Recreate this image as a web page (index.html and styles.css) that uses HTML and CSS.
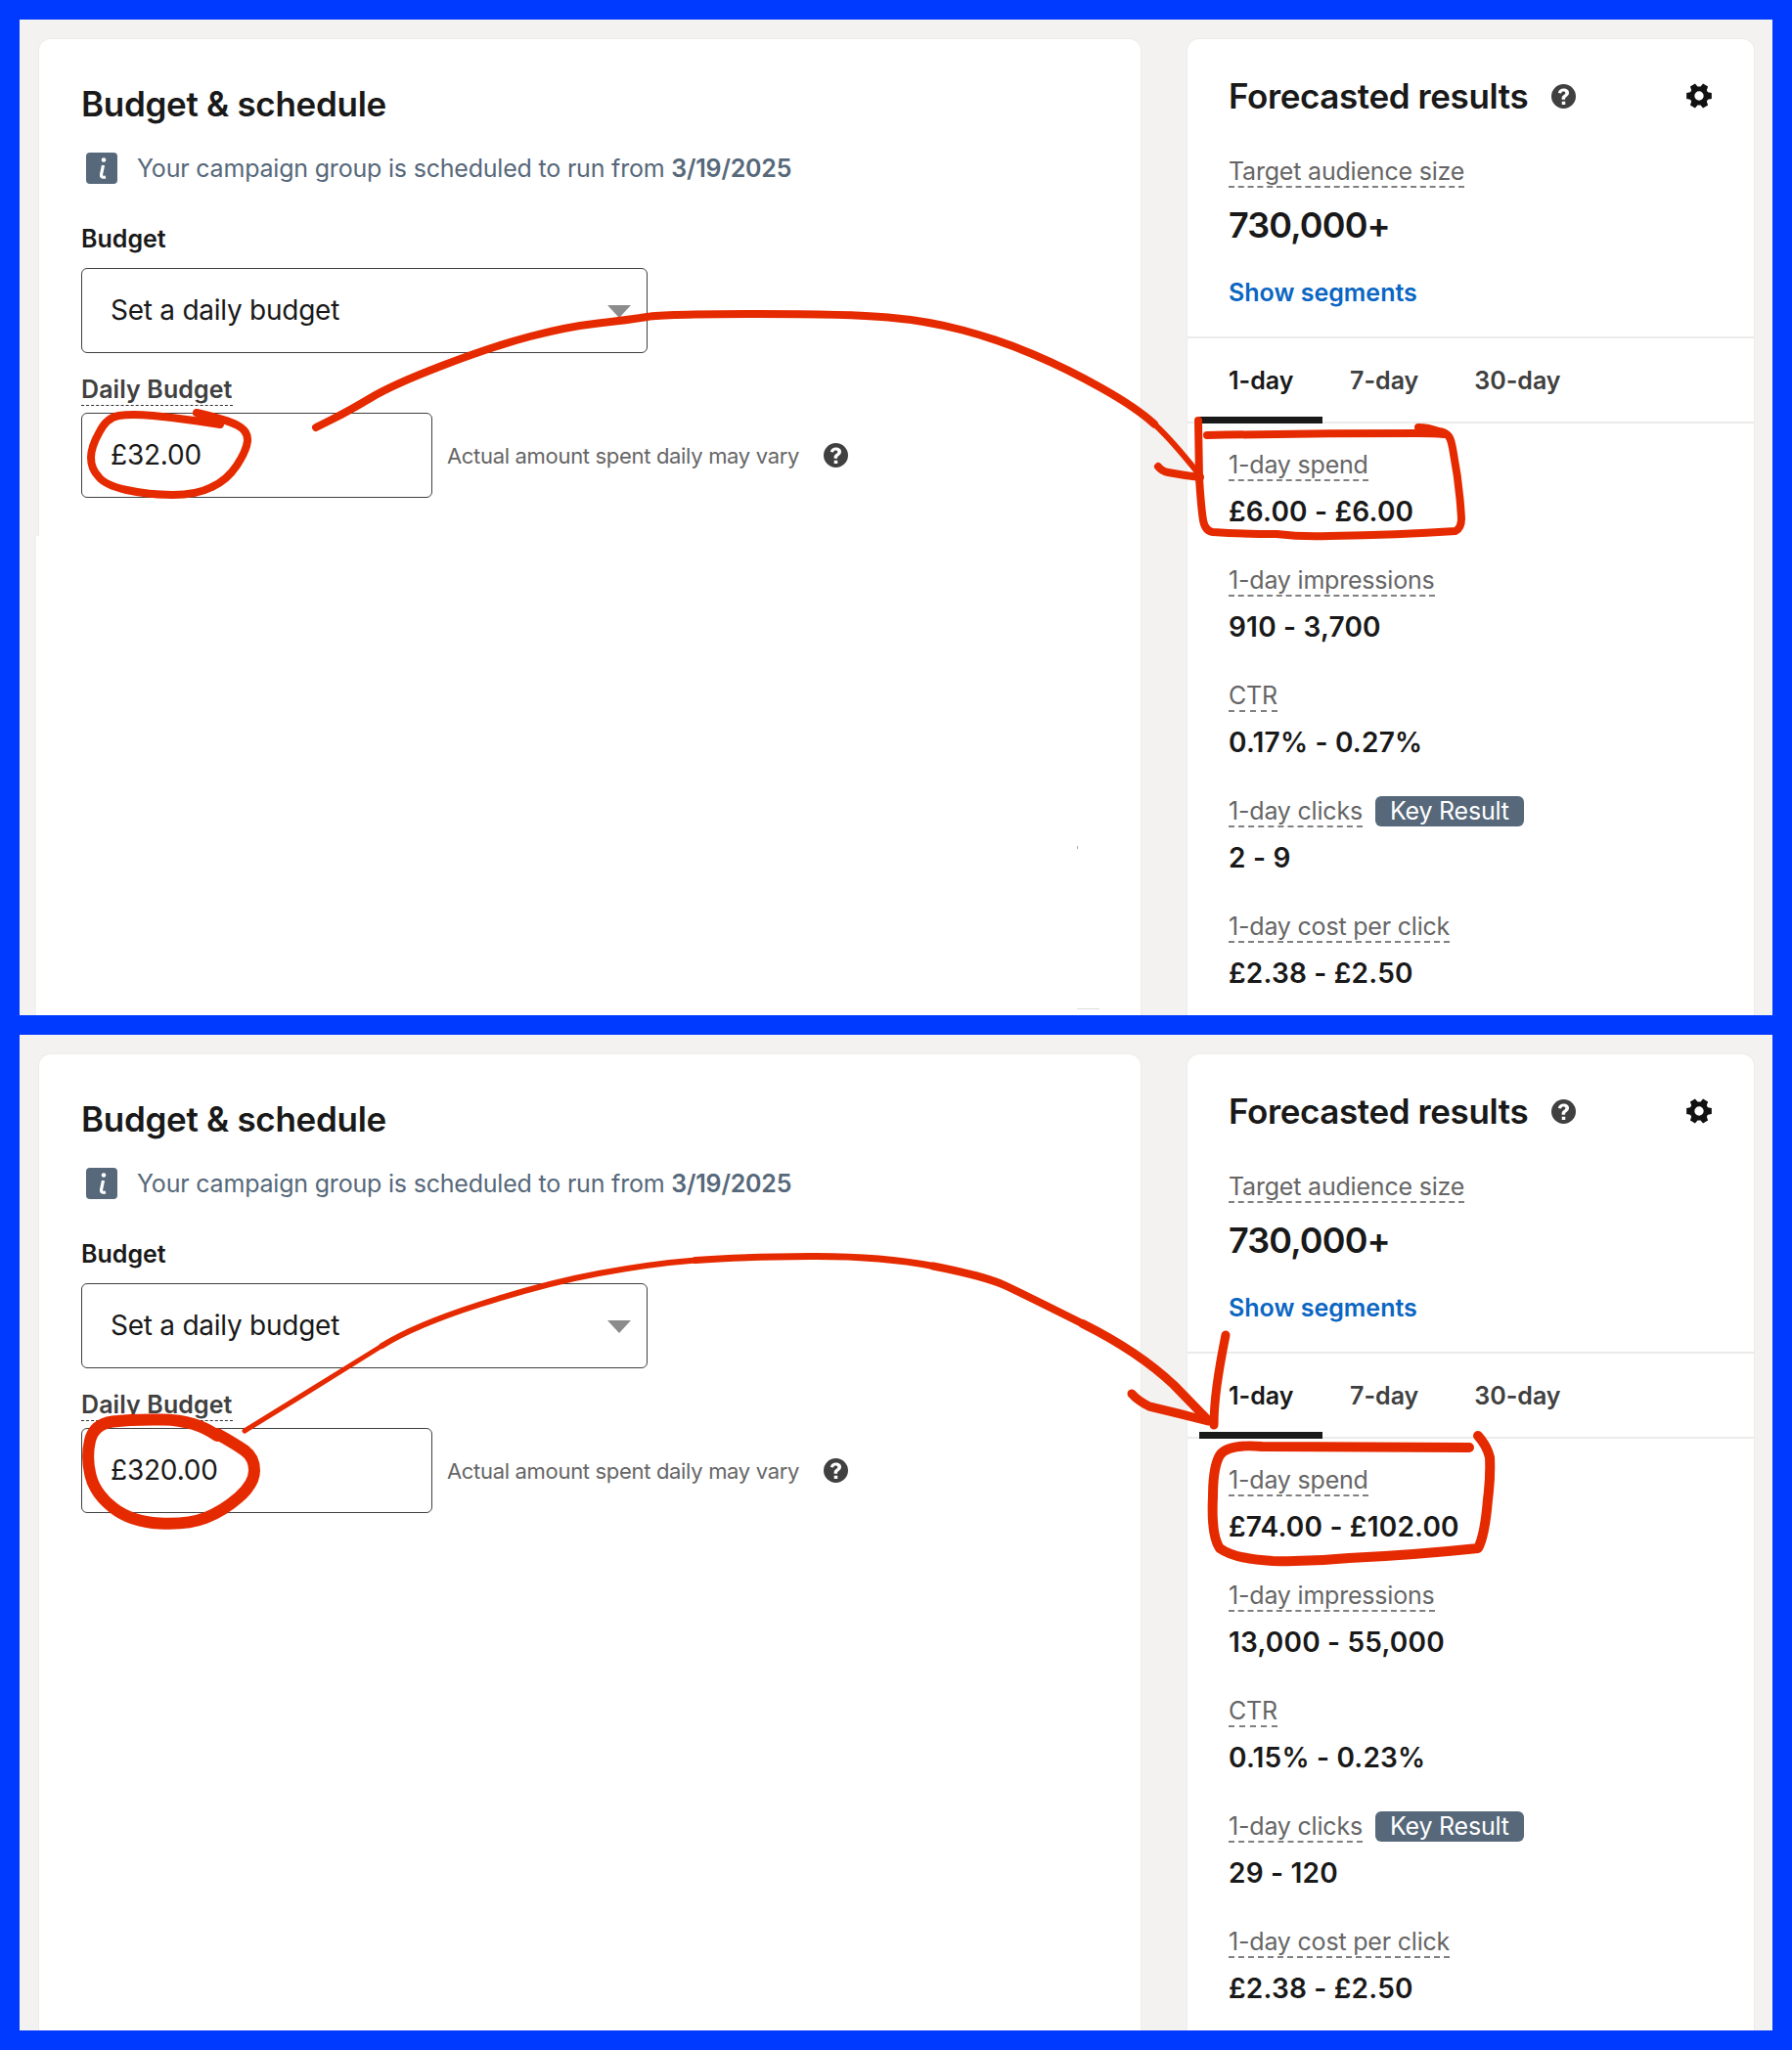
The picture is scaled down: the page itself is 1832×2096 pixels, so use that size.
FILE: index.html
```html
<!DOCTYPE html>
<html lang="en">
<head>
  <meta charset="UTF-8" />
  <title>Budget forecast comparison</title>
  <link rel="stylesheet" href="styles.css">
</head>
<body>
  <div class="page">

    <section class="shot">
      <div class="card budget first">
        <h2>Budget &amp; schedule</h2>
        <div class="notice">
          <svg class="info" viewBox="0 0 32 32"><use href="#info-icon"/></svg>
          <span>Your campaign group is scheduled to run from <b>3/19/2025</b></span>
        </div>
        <label class="field-label">Budget</label>
        <div class="select">Set a daily budget<i class="caret"></i></div>
        <label class="field-label dotted"><span>Daily Budget</span></label>
        <div class="amount-row">
          <div class="amount">£32.00</div>
          <span class="hint">Actual amount spent daily may vary</span>
          <svg class="help" viewBox="0 0 24 24"><use href="#help-icon"/></svg>
        </div>
        <i class="stray-dot"></i>
        <i class="stray-line"></i>
      </div>

      <div class="card forecast">
        <div class="forecast-top">
          <div class="forecast-head">
            <h3>Forecasted results</h3>
            <svg class="help" viewBox="0 0 24 24"><use href="#help-icon"/></svg>
            <svg class="gear" viewBox="0 0 24 24"><use href="#gear-icon"/></svg>
          </div>
          <div class="metric-label">Target audience size</div>
          <div class="audience">730,000+</div>
          <a class="segments">Show segments</a>
        </div>
        <div class="tabs">
          <div class="tab active">1-day</div>
          <div class="tab">7-day</div>
          <div class="tab">30-day</div>
        </div>
        <div class="metrics">
          <div class="metric"><div class="metric-label">1-day spend</div><div class="metric-value">£6.00 - £6.00</div></div>
          <div class="metric"><div class="metric-label">1-day impressions</div><div class="metric-value">910 - 3,700</div></div>
          <div class="metric"><div class="metric-label">CTR</div><div class="metric-value">0.17% - 0.27%</div></div>
          <div class="metric"><div class="metric-label">1-day clicks</div><span class="key">Key Result</span><div class="metric-value">2 - 9</div></div>
          <div class="metric"><div class="metric-label">1-day cost per click</div><div class="metric-value">£2.38 - £2.50</div></div>
        </div>
      </div>
    </section>

    <section class="shot">
      <div class="card budget">
        <h2>Budget &amp; schedule</h2>
        <div class="notice">
          <svg class="info" viewBox="0 0 32 32"><use href="#info-icon"/></svg>
          <span>Your campaign group is scheduled to run from <b>3/19/2025</b></span>
        </div>
        <label class="field-label">Budget</label>
        <div class="select">Set a daily budget<i class="caret"></i></div>
        <label class="field-label dotted"><span>Daily Budget</span></label>
        <div class="amount-row">
          <div class="amount">£320.00</div>
          <span class="hint">Actual amount spent daily may vary</span>
          <svg class="help" viewBox="0 0 24 24"><use href="#help-icon"/></svg>
        </div>
      </div>

      <div class="card forecast">
        <div class="forecast-top">
          <div class="forecast-head">
            <h3>Forecasted results</h3>
            <svg class="help" viewBox="0 0 24 24"><use href="#help-icon"/></svg>
            <svg class="gear" viewBox="0 0 24 24"><use href="#gear-icon"/></svg>
          </div>
          <div class="metric-label">Target audience size</div>
          <div class="audience">730,000+</div>
          <a class="segments">Show segments</a>
        </div>
        <div class="tabs">
          <div class="tab active">1-day</div>
          <div class="tab">7-day</div>
          <div class="tab">30-day</div>
        </div>
        <div class="metrics">
          <div class="metric"><div class="metric-label">1-day spend</div><div class="metric-value">£74.00 - £102.00</div></div>
          <div class="metric"><div class="metric-label">1-day impressions</div><div class="metric-value">13,000 - 55,000</div></div>
          <div class="metric"><div class="metric-label">CTR</div><div class="metric-value">0.15% - 0.23%</div></div>
          <div class="metric"><div class="metric-label">1-day clicks</div><span class="key">Key Result</span><div class="metric-value">29 - 120</div></div>
          <div class="metric"><div class="metric-label">1-day cost per click</div><div class="metric-value">£2.38 - £2.50</div></div>
        </div>
      </div>
    </section>

    <!-- hand drawn red marks on top of the screenshots -->
    <svg class="marks" viewBox="0 0 1832 2096" fill="none" stroke="#e62a00" stroke-linecap="round" stroke-linejoin="round">
      <g stroke-width="8">
        <path d="M225 434L202 430.500Q179 427 156.500 425Q134 423 121.500 425Q109 427 101.500 442Q93 457 93 468Q93 479 100.500 487Q107 496 129.500 501Q152 506 176.500 506Q201 506 216.500 498Q232 491 242 476Q252 461 253 451Q254 441 243 435Q232 429 201 422"/>
        <path d="M323 437L339 429Q357 420 379.500 406.500Q402 393 453 373.500Q504 354 542 344Q580 334 611.500 330.500Q643 327 661.500 324Q680 321 774 321Q868 321 908 324.500Q948 328 984 337.500Q1020 347 1055.500 362Q1091 377 1126.500 397Q1162 417 1180 433.500" />
        <path stroke-width="6" d="M1180 433.500Q1198 450 1225 484"/>
        <path d="M1184 477Q1188 482 1194 483Q1210 486 1227 488"/>
        <path d="M1225 430L1226 489Q1228 520 1230 532Q1232 543 1240 544Q1270 546 1305 546Q1330 549 1359 548Q1430 547 1488 543Q1494 540 1494 530Q1492 495 1486 464Q1484 450 1481 446Q1478 442 1471 441Q1460 437 1450 437"/>
        <path d="M1234 445Q1340 443 1450 443Q1465 443 1476 444"/>
      </g>
      <path stroke-width="12" d="M222 1468Q200 1452 167 1451.500Q134 1451 115 1453.500Q96 1456 92 1473Q88 1490 92.500 1508.500Q97 1527 115.500 1541.500Q134 1556 163 1557.500Q192 1559 210 1552Q228 1545 244 1531Q260 1517 260 1503.500Q260 1490 250 1483Q240 1476 222 1466"/>
      <path stroke-width="5" d="M250 1463L303.500 1430Q357 1397 390.500 1376"/>
      <path stroke-width="6" d="M390.500 1376Q424 1355 491 1333.500Q558 1312 612 1302Q666 1292 711 1288.500"/>
      <path stroke-width="7" d="M711 1288.500Q756 1285 828 1284.500Q900 1284 954 1294.500"/>
      <path stroke-width="8" d="M954 1294.500Q1008 1305 1029 1315Q1050 1325 1107 1353.500"/>
      <path stroke-width="9" d="M1107 1353.500Q1164 1382 1200 1416L1235 1452"/>
      <path stroke-width="9" d="M1157 1425Q1163 1432 1175 1438Q1205 1445 1235 1453"/>
      <path stroke-width="9" d="M1253 1365Q1247 1395 1244 1417Q1241 1440 1241 1457"/>
      <path stroke-width="10" d="M1502 1480L1290 1479Q1255 1476 1247 1488Q1240 1500 1240 1530Q1238 1570 1247 1583Q1262 1594 1301 1596Q1340 1597 1379 1593Q1445 1590 1511 1583Q1518 1570 1521 1533Q1524 1510 1523 1490Q1520 1478 1511 1468"/>
    </svg>

  </div>

  <svg class="defs" aria-hidden="true">
    <symbol id="info-icon" viewBox="0 0 32 32">
      <rect width="32" height="32" rx="4" fill="#56687a"/>
      <circle cx="18" cy="7.500" r="2.300" fill="#fff"/>
      <path d="M17.500 13L15.500 22.500Q15 26 20 25" fill="none" stroke="#fff" stroke-width="3.200"/>
    </symbol>
    <symbol id="help-icon" viewBox="0 0 24 24">
      <path fill-rule="evenodd" d="M12 0a12 12 0 1 1 0 24 12 12 0 0 1 0-24zm-1.700 17.100v3h3.400v-3zM12 4.300c-2.900 0-5 1.500-5.400 4.300l3 .5c.3-1.400 1.100-2 2.300-2 1.100 0 1.900.6 1.900 1.500 0 .8-.5 1.300-1.500 2-1.400 1-2.100 1.900-2.100 3.500v1h3.300v-.7c0-.9.400-1.300 1.400-2 1.400-1 2.400-2 2.400-3.900 0-2.600-2-4.200-5.300-4.200z" fill="#404040"/>
    </symbol>
    <symbol id="gear-icon" viewBox="0 0 24 24">
      <path fill-rule="evenodd" d="M9.500 0h5l.7 3.300 1.800 1 3.200-1.100 2.500 4.300-2.500 2.200v2.600l2.500 2.200-2.500 4.300L17 17.700l-1.800 1-.7 3.300h-5l-.7-3.300-1.800-1-3.200 1.100-2.500-4.300 2.500-2.200V9.700L1.300 7.500l2.500-4.300L7 4.300l1.800-1zM12 7a4 4 0 1 0 0 8 4 4 0 0 0 0-8z" fill="#111" transform="rotate(90 12 12) translate(0 1)"/>
    </symbol>
  </svg>
</body>
</html>
```

FILE: styles.css
```css
* { box-sizing: border-box; }

body {
  margin: 0;
  background: #0039ff;
  font-family: Inter, "Liberation Sans", sans-serif;
  color: #191919;
}

.page {
  position: relative;
  width: 1832px;
  height: 2096px;
  padding: 20px;
  display: flex;
  flex-direction: column;
  gap: 20px;
}

.shot {
  height: 1018px;
  background: #f3f2f0;
  padding: 20px 19px 0 20px;
  display: flex;
  gap: 48px;
  overflow: hidden;
}

.card {
  background: #fff;
  border-radius: 12px 12px 0 0;
  box-shadow: 0 0 0 1px #ececea;
}

/* left card */
.budget {
  position: relative;
  width: 1126px;
  padding: 44px 43px;
}

/* leftovers of the screenshot crop */
.first::before {
  content: "";
  position: absolute;
  left: -3px;
  top: 508px;
  bottom: 0;
  width: 4px;
  background: #fff;
}
.stray-dot {
  position: absolute;
  left: 1061px;
  top: 825px;
  width: 1px;
  height: 3px;
  background: #aaa;
}
.stray-line {
  position: absolute;
  left: 1061px;
  top: 991px;
  width: 23px;
  height: 1px;
  background: #ddd;
}

h2 {
  margin: 0;
  font-size: 35px;
  line-height: 44px;
  font-weight: 600;
  letter-spacing: -0.3px;
}

.notice {
  display: flex;
  align-items: center;
  gap: 20px;
  margin: 28px 0 0 5px;
  color: #56687a;
  font-size: 25px;
  line-height: 32px;
  letter-spacing: -0.2px;
}
.notice b { font-weight: 600; }
.info { width: 32px; height: 32px; flex: none; }

.field-label {
  display: block;
  font-size: 25px;
  line-height: 32px;
  font-weight: 600;
  margin-top: 40px;
}
.field-label.dotted { margin-top: 22px; color: #404040; line-height: 30px; letter-spacing: 0.1px; }
.field-label.dotted span { display: inline-block; border-bottom: 1px dashed #333; padding-bottom: 1px; }

.select {
  position: relative;
  width: 579px;
  height: 87px;
  margin-top: 14px;
  padding-left: 29px;
  border: 1px solid #404040;
  border-radius: 6px;
  font-size: 28px;
  line-height: 85px;
  letter-spacing: -0.25px;
}
.caret {
  position: absolute;
  right: 16px;
  top: 37px;
  border-left: 12px solid transparent;
  border-right: 12px solid transparent;
  border-top: 13px solid #8c8c8c;
}

.amount-row {
  display: flex;
  align-items: center;
  margin-top: 7px;
}
.amount {
  width: 359px;
  height: 87px;
  padding-left: 29px;
  border: 1px solid #404040;
  border-radius: 6px;
  font-size: 28px;
  line-height: 85px;
  letter-spacing: -0.2px;
}
.hint {
  margin-left: 15px;
  font-size: 22px;
  color: #666;
  letter-spacing: -0.32px;
}
.amount-row .help { margin-left: 25px; }

.help { width: 25px; height: 25px; flex: none; }

/* right card */
.forecast { width: 579px; }
.forecast-top {
  padding: 30px 42px 0;
  height: 306px;
  border-bottom: 2px solid #ebebeb;
}
.forecast-head {
  display: flex;
  align-items: center;
  margin-bottom: 34px;
}
h3 {
  margin: 0;
  font-size: 35px;
  line-height: 56px;
  font-weight: 600;
  letter-spacing: -0.4px;
}
.forecast-head .help { margin-left: 24px; }
.gear { width: 28px; height: 28px; margin-left: auto; }

.metric-label {
  display: inline-block;
  font-size: 25px;
  line-height: 30px;
  color: #666;
  border-bottom: 2px dashed #808080;
  letter-spacing: -0.2px;
}
.audience {
  font-size: 36px;
  line-height: 46px;
  font-weight: 600;
  margin-top: 15px;
  letter-spacing: -0.85px;
}
.segments {
  display: block;
  margin-top: 30px;
  color: #0a66c2;
  font-size: 25px;
  line-height: 32px;
  font-weight: 600;
}

.tabs {
  display: flex;
  height: 87px;
  padding-left: 12px;
  border-bottom: 2px solid #ebebeb;
}
.tab {
  padding: 28px 29px 0 28px;
  font-size: 25px;
  font-weight: 600;
  color: #404040;
  white-space: nowrap;
}
.tab.active {
  width: 126px;
  height: 87px;
  padding: 28px 0 0 30px;
  color: #191919;
  border-bottom: 7px solid #191919;
}

.metrics { padding: 27px 42px 0; }
.metric { height: 118px; }
.metric-value {
  font-size: 28px;
  line-height: 36px;
  font-weight: 600;
  margin-top: 13px;
  letter-spacing: 0.2px;
}
.key {
  display: inline-block;
  margin-left: 13px;
  padding: 0 15px;
  height: 31px;
  background: #56687a;
  color: #fff;
  border-radius: 6px;
  font-size: 25px;
  line-height: 31px;
  letter-spacing: -0.2px;
  vertical-align: top;
}

.marks {
  position: absolute;
  left: 0;
  top: 0;
  width: 1832px;
  height: 2096px;
  pointer-events: none;
}
.defs { position: absolute; width: 0; height: 0; }
```
